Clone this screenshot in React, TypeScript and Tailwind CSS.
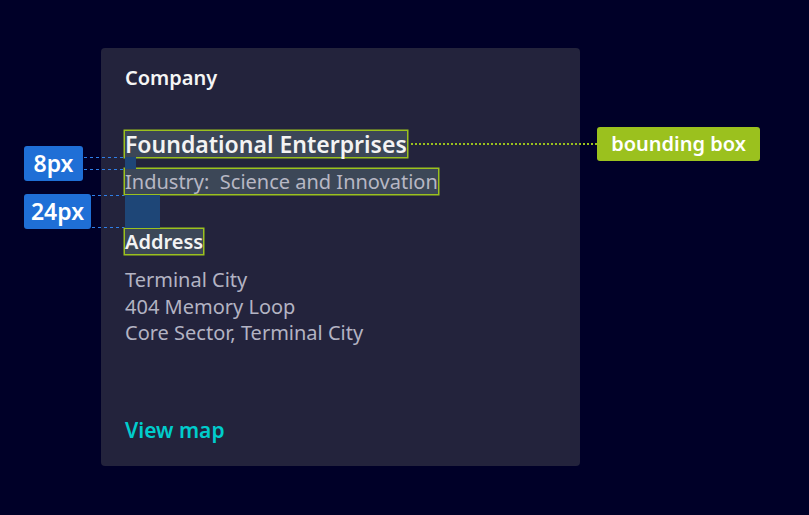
import React from 'react';

const font = { fontFamily: '"Noto Sans", "Open Sans", sans-serif' };

const Highlight: React.FC<{ className?: string; children: React.ReactNode }> = ({ className = '', children }) => (
     <span className={`block w-fit bg-[#3c4757] ring-[1.5px] ring-[#9bc11e] ${className}`}>{children}</span>
);

export default function App() {
     return (
          <div className="relative w-[809px] h-[515px] bg-[#000028] overflow-hidden" style={font}>
               <div className="absolute left-0 top-0 pt-[48px] pl-[101px]">
                    <div className="flex flex-col w-[479px] h-[418px] rounded-[4px] bg-[#23233c] pl-[24px] pt-[18px] pb-[24px]">
                         <h2 className="text-[20px] leading-[24px] font-semibold text-[#f5f5f5]">Company</h2>

                         <Highlight className="mt-[41px] text-[23px] leading-[26px] font-semibold text-[#f3f3f3]">
                              Foundational Enterprises
                         </Highlight>
                         <Highlight className="mt-[12px] text-[20px] leading-[25px] text-[#b7b7c4]">
                              Industry:&nbsp; Science and Innovation
                         </Highlight>

                         <Highlight className="mt-[35px] text-[20px] leading-[25px] font-semibold text-[#f3f3f3]">
                              Address
                         </Highlight>
                         <div className="mt-[13px] text-[20px] leading-[26.5px] text-[#b3b3c3]">
                              <p>Terminal City</p>
                              <p>404 Memory Loop</p>
                              <p>Core Sector, Terminal City</p>
                         </div>

                         <a className="mt-auto text-[21px] leading-[24px] font-semibold text-[#00cccc]">View map</a>
                    </div>
               </div>

               {/* spacing markers */}
               <div className="absolute left-[125px] top-[157px] w-[11px] h-[12px] bg-[#1e4677]" />
               <div className="absolute left-[125px] top-[195px] w-[35px] h-[33px] bg-[#1e4677]" />

               <svg className="absolute inset-0 pointer-events-none" width="809" height="515" shapeRendering="crispEdges">
                    <g stroke="#2f7fe8" strokeWidth="1.5" strokeDasharray="3 3">
                         <line x1="84" y1="157.5" x2="124" y2="157.5" />
                         <line x1="84" y1="169.5" x2="124" y2="169.5" />
                         <line x1="92" y1="195.5" x2="124" y2="195.5" />
                         <line x1="92" y1="227.5" x2="124" y2="227.5" />
                    </g>
                    <line x1="411" y1="144" x2="597" y2="144" stroke="#9bc11e" strokeWidth="1.5" strokeDasharray="2 2" />
               </svg>

               <div className="absolute left-[24px] top-[146px] w-[59px] h-[35px] rounded-[3px] bg-[#1f6fd6] flex items-center justify-center text-[23px] font-semibold text-white">
                    8px
               </div>
               <div className="absolute left-[24px] top-[194px] w-[67px] h-[35px] rounded-[3px] bg-[#1f6fd6] flex items-center justify-center text-[23px] font-semibold text-white">
                    24px
               </div>

               <div className="absolute left-[597px] top-[127px] w-[163px] h-[34px] rounded-[3px] bg-[#9bc11e] flex items-center justify-center text-[20px] font-semibold text-white">
                    bounding box
               </div>
          </div>
     );
}
